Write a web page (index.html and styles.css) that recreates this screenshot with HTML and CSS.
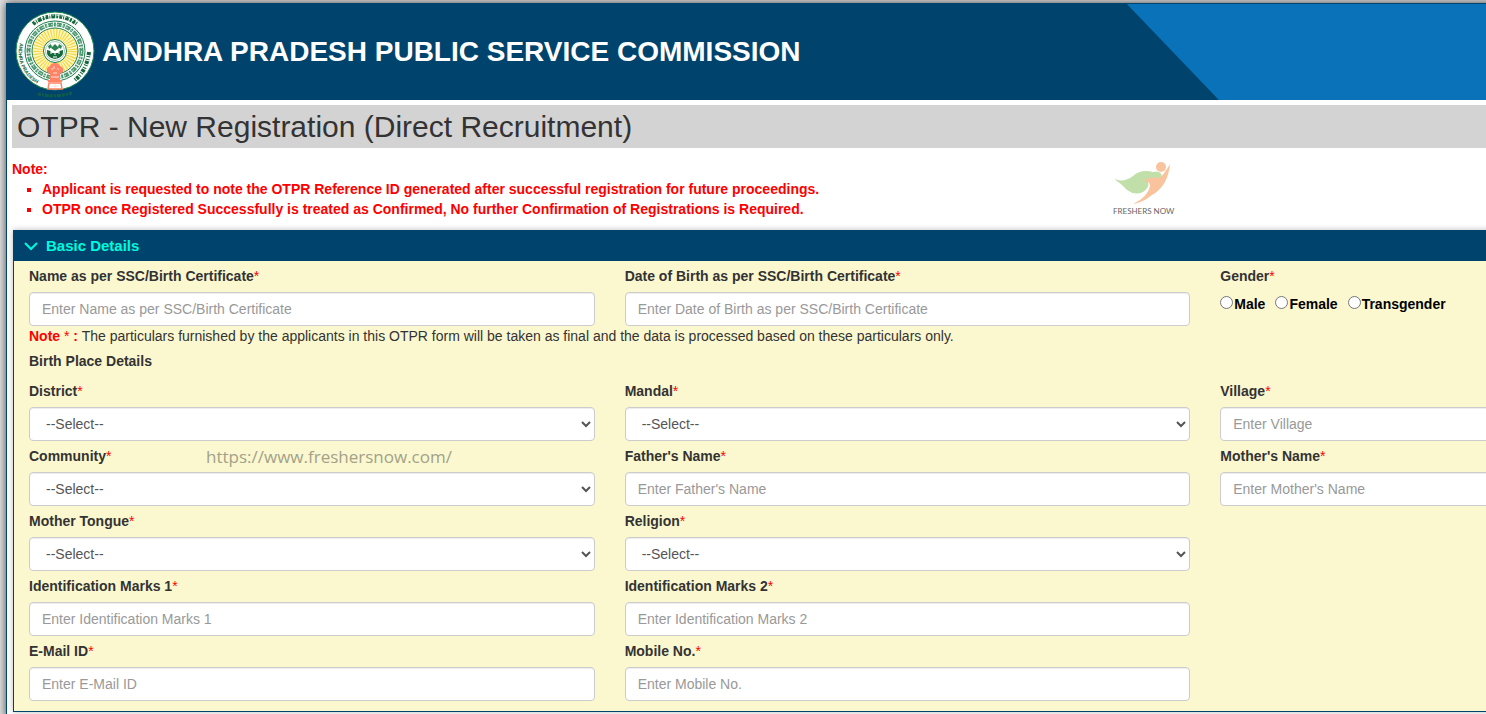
FILE: index.html
```html
<!DOCTYPE html>
<html lang="en">
<head>
    <meta charset="UTF-8">
    <meta name="viewport" content="width=device-width, initial-scale=1.0">
    <title>OTPR - New Registration</title>
    <link rel="stylesheet" href="styles.css">
</head>
<body>
    <div class="page">
        <header class="banner">
            <svg class="emblem" viewBox="0 0 80 88" aria-hidden="true">
                <defs>
                    <path id="ringLeft" d="M5 33 A35 35 0 0 0 32 77"/>
                </defs>
                <circle cx="40" cy="41" r="39" fill="#fff" stroke="#1c8a4e" stroke-width="1"/>
                <path d="M18 14 A35 35 0 0 1 62 14" fill="none" stroke="#14683c" stroke-width="4" stroke-dasharray="3 1 1 1 4 1 2 1"/>
                <path d="M19 12 A36 36 0 0 1 61 12" fill="none" stroke="#fff" stroke-width="1" stroke-dasharray="2 2 1 3"/>
                <circle cx="40" cy="41" r="30" fill="#fff" stroke="#1c7a48" stroke-width="1"/>
                <circle cx="40" cy="41" r="26.5" fill="none" stroke="#4b9970" stroke-width="4" stroke-dasharray="5 1 2 1"/>
                <circle cx="40" cy="41" r="26.5" fill="none" stroke="#c4dfce" stroke-width="1" stroke-dasharray="3 2"/>
                <circle cx="40" cy="41" r="23" fill="#fff8bf" stroke="#1c7a48" stroke-width="1"/>
                <circle cx="40" cy="41" r="17" fill="none" stroke="#f3d84e" stroke-width="10" stroke-dasharray="1.2 1.4"/>
                <circle cx="40" cy="41" r="11.5" fill="#fff" stroke="#1c7a48" stroke-width="1"/>
                <circle cx="40" cy="41" r="9.5" fill="none" stroke="#9cc9ae" stroke-width="1"/>
                <path d="M32 40 q-1 8 8 9 q9 -1 8 -9 q-3 0 -5 3 h-6 q-2 -3 -5 -3z" fill="#14683c"/>
                <path d="M36 38 l4 -4 4 4 -4 3z M33 36 l3 -2 1 3 -3 2z M47 36 l-3 -2 -1 3 3 2z" fill="#2b8352"/>
                <path d="M35 43 h2 M39 44 h2 M43 43 h2 M38 47 h4" stroke="#fff" stroke-width="1"/>
                <text class="emblem-text"><textPath href="#ringLeft">ANDHRA PRADESH</textPath></text>
                <path d="M60 70 Q72 60 74 42" fill="none" stroke="#14683c" stroke-width="4" stroke-dasharray="1 1 3 1 1 2"/>
                <path d="M32 62 q-1 -5 3 -6 q1 -3 5 -3 q4 0 5 3 q4 1 3 6 l-3 2 v6 h2 v2 h-14 v-2 h2 v-6z" fill="#ff8364"/>
                <path d="M34 73 h12 l1 6 h-14z" fill="#fff" stroke="#ff8364" stroke-width="1.5"/>
                <path d="M36 59 h2 M42 59 h2 M39 56 v3 M36 67 h8 M38 63 h4 M40 74 v4 M36 76 h8" stroke="#ffe3da" stroke-width="1"/>
                <path d="M23 84 q17 4 34 -1" fill="none" stroke="#0f5c4c" stroke-width="3" stroke-dasharray="3 1 2 1 4 1"/>
            </svg>
            <div class="banner-title">ANDHRA PRADESH PUBLIC SERVICE COMMISSION</div>
            <div class="banner-accent"></div>
        </header>

        <main class="content">
            <h1>OTPR - New Registration (Direct Recruitment)</h1>

            <div class="notes">
                <p>Note:</p>
                <ul>
                    <li>Applicant is requested to note the OTPR Reference ID generated after successful registration for future proceedings.</li>
                    <li>OTPR once Registered Successfully is treated as Confirmed, No further Confirmation of Registrations is Required.</li>
                </ul>
                <div class="brand">
                    <svg viewBox="0 0 60 44" aria-hidden="true">
                        <path d="M1 18 Q11 22 20 15 Q28 8 40 11 Q49 9 49 17 Q44 20 35 21 Q37 26 30 31 Q22 35 14 29 Q9 23 1 18z" fill="#c1dfa9"/>
                        <path d="M57 3 Q50 15 46 17 Q37 15 30 20 Q37 20 37 25 Q35 36 20 43 Q29 42 39 34 Q55 25 57 3z" fill="#f9c49d"/>
                        <circle cx="48" cy="6" r="5" fill="#f9c49d"/>
                    </svg>
                    <span>FRESHERS NOW</span>
                </div>
            </div>

            <form class="panel">
                <h2>
                    <svg viewBox="0 0 14 10" aria-hidden="true"><path d="M1 2 L7 8 L13 2"/></svg>
                    Basic Details
                </h2>
                <div class="panel-body">
                    <div class="row">
                        <div class="field">
                            <label for="name">Name as per SSC/Birth Certificate<i>*</i></label>
                            <input type="text" id="name" placeholder="Enter Name as per SSC/Birth Certificate">
                        </div>
                        <div class="field">
                            <label for="dob">Date of Birth as per SSC/Birth Certificate<i>*</i></label>
                            <input type="text" id="dob" placeholder="Enter Date of Birth as per SSC/Birth Certificate">
                        </div>
                        <div class="field" role="radiogroup" aria-labelledby="gender">
                            <span class="label" id="gender">Gender<i>*</i></span>
                            <div class="radios">
                                <input type="radio" name="gender" id="male"><label for="male">Male</label>
                                <input type="radio" name="gender" id="female"><label for="female">Female</label>
                                <input type="radio" name="gender" id="transgender"><label for="transgender">Transgender</label>
                            </div>
                        </div>
                    </div>
                    <p class="hint"><b>Note <i>*</i> :</b> The particulars furnished by the applicants in this OTPR form will be taken as final and the data is processed based on these particulars only.</p>
                    <h3>Birth Place Details</h3>
                    <div class="row">
                        <div class="field">
                            <label for="district">District<i>*</i></label>
                            <select id="district"><option>--Select--</option></select>
                        </div>
                        <div class="field">
                            <label for="mandal">Mandal<i>*</i></label>
                            <select id="mandal"><option>--Select--</option></select>
                        </div>
                        <div class="field">
                            <label for="village">Village<i>*</i></label>
                            <input type="text" id="village" placeholder="Enter Village">
                        </div>
                        <div class="field">
                            <label for="community">Community<i>*</i></label>
                            <select id="community"><option>--Select--</option></select>
                            <span class="watermark">https://www.freshersnow.com/</span>
                        </div>
                        <div class="field">
                            <label for="father">Father's Name<i>*</i></label>
                            <input type="text" id="father" placeholder="Enter Father's Name">
                        </div>
                        <div class="field">
                            <label for="mother">Mother's Name<i>*</i></label>
                            <input type="text" id="mother" placeholder="Enter Mother's Name">
                        </div>
                    </div>
                    <div class="row">
                        <div class="field">
                            <label for="tongue">Mother Tongue<i>*</i></label>
                            <select id="tongue"><option>--Select--</option></select>
                        </div>
                        <div class="field">
                            <label for="religion">Religion<i>*</i></label>
                            <select id="religion"><option>--Select--</option></select>
                        </div>
                    </div>
                    <div class="row">
                        <div class="field">
                            <label for="marks1">Identification Marks 1<i>*</i></label>
                            <input type="text" id="marks1" placeholder="Enter Identification Marks 1">
                        </div>
                        <div class="field">
                            <label for="marks2">Identification Marks 2<i>*</i></label>
                            <input type="text" id="marks2" placeholder="Enter Identification Marks 2">
                        </div>
                    </div>
                    <div class="row">
                        <div class="field">
                            <label for="email">E-Mail ID<i>*</i></label>
                            <input type="email" id="email" placeholder="Enter E-Mail ID">
                        </div>
                        <div class="field">
                            <label for="mobile">Mobile No.<i>*</i></label>
                            <input type="tel" id="mobile" placeholder="Enter Mobile No.">
                        </div>
                    </div>
                </div>
            </form>
        </main>
    </div>
</body>
</html>
```
FILE: styles.css
```css
* { box-sizing: border-box; }
html { overflow: hidden; background: #ddd; }
body { margin: 0; padding: 3px 0 0 6px; font: 14px/20px "Liberation Sans", Arial, sans-serif; color: #333; }
p, ul, h1, h2, h3 { margin: 0; padding: 0; }
i { color: red; font-style: normal; font-weight: normal; }

/* wider than the window: the third column runs off the right edge */
.page { margin-right: -21.75%; min-height: 100vh; background: #fff; border: 1px solid #00446d; box-shadow: 0 0 8px #444; }

.banner { display: flex; align-items: center; height: 96px; background: #00446d; color: #fff; }
.emblem { width: 80px; height: 88px; margin: 4px 0 0 8px; flex: none; }
.emblem-text { font: bold 5px "Liberation Sans", Arial, sans-serif; fill: #14683c; }
.banner-title { margin-left: 7px; font-size: 28px; font-weight: bold; line-height: 36px; white-space: nowrap; }
.banner-accent { width: 680px; height: 100%; margin-left: auto; background: #0a72b9; clip-path: polygon(0 0, 100% 0, 100% 100%, 92px 100%); }

.content { padding: 5px; }
h1 { padding: 5px; background: #d3d3d3; font-size: 30px; font-weight: normal; line-height: 33px; }

.notes { position: relative; padding: 11px 0; color: red; font-weight: bold; }
.notes ul { padding-left: 30px; list-style: square; }
.brand { position: absolute; left: 1101px; top: 13px; display: flex; flex-direction: column; width: 63px; color: #666; font: 8px/12px Lato, sans-serif; white-space: nowrap; }
.brand svg { width: 60px; height: 44px; }

.panel { margin-left: 1px; background: #fbf8d0; border: 1px solid #00446d; box-shadow: 0 0 6px #bbb; }
.panel h2 { display: flex; align-items: center; gap: 8px; height: 30px; padding-left: 10px; background: #00446d; color: #00fadc; font-size: 15px; }
.panel h2 svg { width: 14px; height: 10px; fill: none; stroke: #00fadc; stroke-width: 2; }
.panel-body { padding: 5px 15px 10px; }
.row { display: grid; grid-template-columns: repeat(3, 1fr); gap: 5px 30px; }
.row + .row { margin-top: 5px; }
.field { position: relative; }
.field > label, .label { display: block; margin-bottom: 6px; font-weight: bold; }
.field > input, .field > select { display: block; width: 100%; height: 34px; padding: 6px 12px; border: 1px solid #ccc; border-radius: 4px; background: #fff; box-shadow: inset 0 1px 1px rgba(0, 0, 0, 0.075); color: #555; font: 14px/20px "Liberation Sans", Arial, sans-serif; }
.field > select { padding-right: 0; }
input::placeholder { color: #999; }

.radios { display: flex; align-items: center; height: 24px; color: #000; font-weight: bold; }
.radios input { width: 13px; height: 13px; margin: 0 1px 3px 0; }
.radios label { margin-right: 10px; }

.hint b { color: red; }
h3 { margin: 5px 0 10px; font-size: 14px; line-height: 20px; }
.watermark { position: absolute; left: 177px; top: 0; color: #a3a188; font: 17px/22px "Open Sans", sans-serif; }
```
